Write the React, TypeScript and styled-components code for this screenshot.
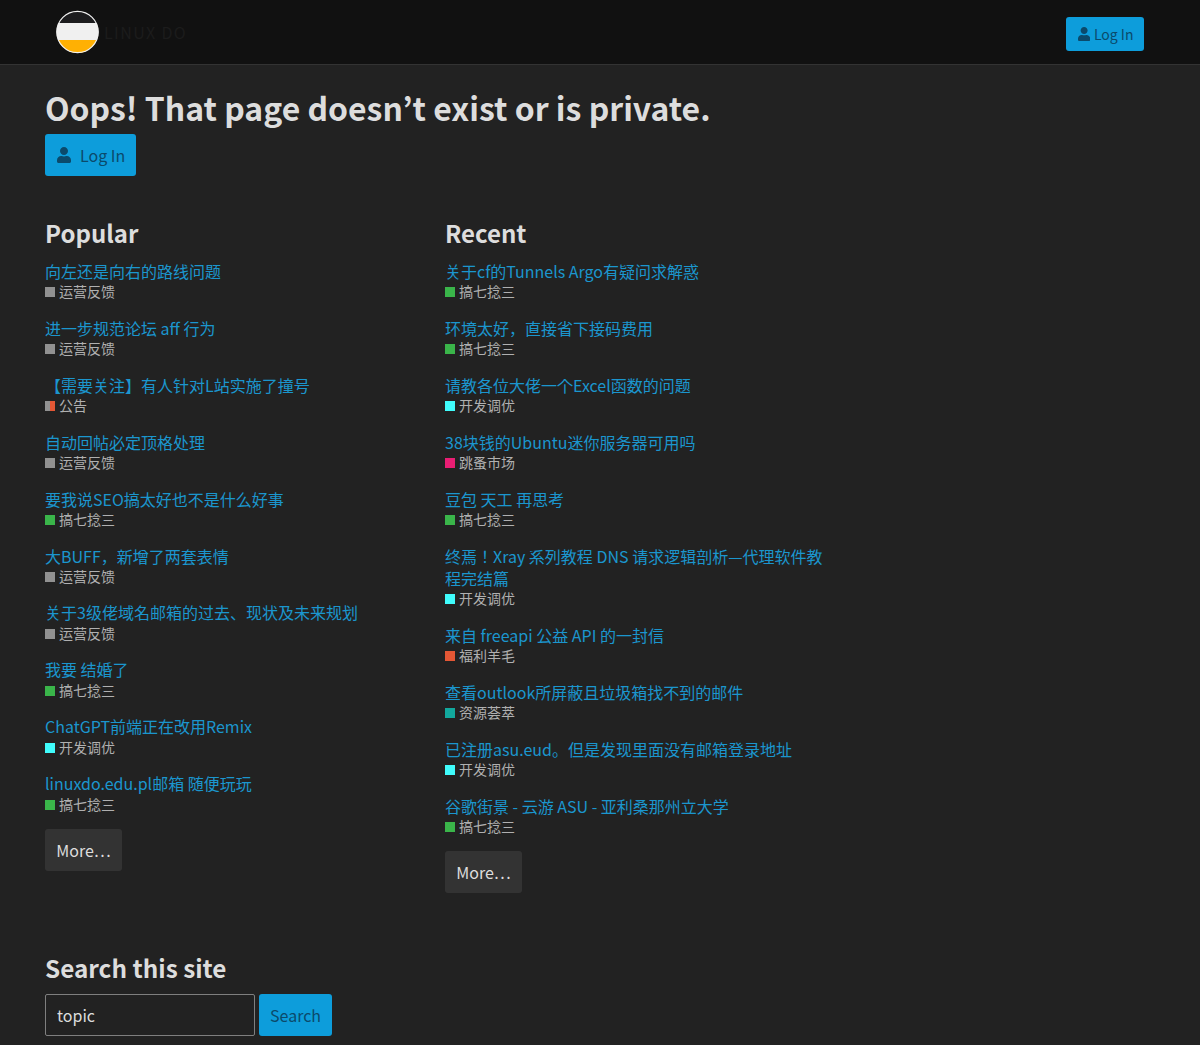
import React, { FC } from 'react';
import styled, { createGlobalStyle } from 'styled-components';

const FONT = `"Noto Sans CJK JP", "Noto Sans", sans-serif`;

const GlobalStyle = createGlobalStyle`
  html, body {
    margin: 0;
    padding: 0;
    background: #222222;
  }
  body {
    font-family: ${FONT};
    font-size: 16px;
    color: #dddddd;
  }
`;

const Header = styled.header`
  height: 64px;
  background: #111111;
  border-bottom: 1px solid #333333;
  display: flex;
  align-items: center;
  justify-content: space-between;
  padding: 0 56px;
`;

const Brand = styled.div`
  display: flex;
  align-items: center;
  gap: 4px;
`;

const BrandName = styled.span`
  font-size: 16px;
  letter-spacing: 1.4px;
  color: #1c1c1c;
`;

const HeaderLogin = styled.div`
  margin-top: 4px;
`;

const Main = styled.main`
  padding: 18px 45px 0;
`;

const Title = styled.h1`
  margin: 0 0 3px;
  font-size: 31.95px;
  line-height: 48px;
  font-weight: 700;
  color: #dddddd;
`;

const Button = styled.button<{ $small?: boolean }>`
  display: inline-flex;
  align-items: center;
  gap: ${(p) => (p.$small ? '3.5px' : '9px')};
  height: ${(p) => (p.$small ? '34px' : '42px')};
  padding: ${(p) => (p.$small ? '0 10.5px 0 11px' : '0 11px')};
  border: 0;
  border-radius: 3px;
  background: #0d9ddb;
  color: #0b4a6b;
  font-family: ${FONT};
  font-size: ${(p) => (p.$small ? '14px' : '16px')};
`;

const MoreButton = styled.button`
  display: block;
  height: 42px;
  width: 77px;
  border: 0;
  border-radius: 3px;
  background: #333333;
  color: #dddddd;
  font-family: ${FONT};
  font-size: 16px;
`;

const Columns = styled.div`
  display: flex;
  margin-top: 39px;
`;

const Column = styled.section`
  width: 400px;
  flex: none;
`;

const SectionTitle = styled.h2<{ $wide?: boolean }>`
  margin: 0;
  font-size: ${(p) => (p.$wide ? '24.3px' : '24px')};
  line-height: 36px;
  font-weight: 700;
  color: #dddddd;
`;

const TopicList = styled.ul`
  list-style: none;
  margin: 9px 0 0;
  padding: 0;
  max-width: 380px;
`;

const Topic = styled.li`
  margin-bottom: 16.5px;
`;

const TopicLink = styled.a`
  display: block;
  font-size: 16px;
  line-height: 22.4px;
  color: #1b96ce;
  text-decoration: none;
`;

const Category = styled.div`
  display: flex;
  align-items: center;
  gap: 4px;
  font-size: 14px;
  line-height: 18px;
  color: #b0b0b0;
`;

const Swatch = styled.span<{ $color: string; $side?: string }>`
  width: 10px;
  height: 10px;
  flex: none;
  margin-top: 2px;
  background: ${(p) =>
    p.$side
      ? `linear-gradient(90deg, ${p.$side} 50%, ${p.$color} 50%)`
      : p.$color};
`;

const SearchSection = styled.section`
  margin-top: 57px;
`;

const SearchRow = styled.form`
  display: flex;
  gap: 4px;
  margin-top: 8px;
`;

const SearchInput = styled.input`
  box-sizing: border-box;
  width: 210px;
  height: 42px;
  padding: 0 11px;
  border: 1px solid #7f7f7f;
  border-radius: 2px;
  background: #222222;
  color: #dddddd;
  font-family: ${FONT};
  font-size: 16px;
  outline: none;
`;

const UserGlyph = styled.svg`
  margin-left: 1px;
  flex: none;
  fill: currentColor;
`;

const GRAY = '#919191';
const GREEN = '#3ab54a';
const CYAN = '#40fcfc';
const ORANGE = '#e45735';
const PINK = '#e91e74';
const TEAL = '#12a89d';

type TopicItem = { title: string; category: string; color: string; side?: string };

const popular: TopicItem[] = [
  { title: '向左还是向右的路线问题', category: '运营反馈', color: GRAY },
  { title: '进一步规范论坛 aff 行为', category: '运营反馈', color: GRAY },
  { title: '【需要关注】有人针对L站实施了撞号', category: '公告', color: ORANGE, side: GRAY },
  { title: '自动回帖必定顶格处理', category: '运营反馈', color: GRAY },
  { title: '要我说SEO搞太好也不是什么好事', category: '搞七捻三', color: GREEN },
  { title: '大BUFF，新增了两套表情', category: '运营反馈', color: GRAY },
  { title: '关于3级佬域名邮箱的过去、现状及未来规划', category: '运营反馈', color: GRAY },
  { title: '我要 结婚了', category: '搞七捻三', color: GREEN },
  { title: 'ChatGPT前端正在改用Remix', category: '开发调优', color: CYAN },
  { title: 'linuxdo.edu.pl邮箱 随便玩玩', category: '搞七捻三', color: GREEN },
];

const recent: TopicItem[] = [
  { title: '关于cf的Tunnels Argo有疑问求解惑', category: '搞七捻三', color: GREEN },
  { title: '环境太好，直接省下接码费用', category: '搞七捻三', color: GREEN },
  { title: '请教各位大佬一个Excel函数的问题', category: '开发调优', color: CYAN },
  { title: '38块钱的Ubuntu迷你服务器可用吗', category: '跳蚤市场', color: PINK },
  { title: '豆包 天工 再思考', category: '搞七捻三', color: GREEN },
  { title: '终焉！Xray 系列教程 DNS 请求逻辑剖析—代理软件教程完结篇', category: '开发调优', color: CYAN },
  { title: '来自 freeapi 公益 API 的一封信', category: '福利羊毛', color: ORANGE },
  { title: '查看outlook所屏蔽且垃圾箱找不到的邮件', category: '资源荟萃', color: TEAL },
  { title: '已注册asu.eud。但是发现里面没有邮箱登录地址', category: '开发调优', color: CYAN },
  { title: '谷歌街景 - 云游 ASU - 亚利桑那州立大学', category: '搞七捻三', color: GREEN },
];

const Logo: FC = () => (
  <svg width="44" height="44" viewBox="0 0 44 44">
    <defs>
      <clipPath id="logoClip">
        <circle cx="21.5" cy="22" r="21" />
      </clipPath>
    </defs>
    <g clipPath="url(#logoClip)">
      <rect x="0" y="0" width="44" height="13" fill="#1c1c1e" />
      <rect x="0" y="13" width="44" height="17" fill="#f0f0f0" />
      <rect x="0" y="30" width="44" height="14" fill="#ffb003" />
    </g>
    <circle cx="21.5" cy="22" r="20.7" fill="none" stroke="#f0f0f0" strokeWidth="1.2" />
  </svg>
);

const UserIcon: FC<{ size: number }> = ({ size }) => (
  <UserGlyph width={size * 0.875} height={size} viewBox="0 0 448 512">
    <path d="M224 256c70.7 0 128-57.3 128-128S294.7 0 224 0 96 57.3 96 128s57.3 128 128 128zm89.6 32h-16.7c-22.2 10.200-46.900 16-72.900 16s-50.600-5.800-72.900-16h-16.700C60.200 288 0 348.200 0 422.400V464c0 26.500 21.500 48 48 48h352c26.500 0 48-21.500 48-48v-41.600c0-74.200-60.200-134.400-134.400-134.400z" />
  </UserGlyph>
);

const TopicColumn: FC<{ heading: string; items: TopicItem[] }> = ({ heading, items }) => (
  <Column>
    <SectionTitle>{heading}</SectionTitle>
    <TopicList>
      {items.map((item) => (
        <Topic key={item.title}>
          <TopicLink href="#">{item.title}</TopicLink>
          <Category>
            <Swatch $color={item.color} $side={item.side} />
            {item.category}
          </Category>
        </Topic>
      ))}
    </TopicList>
    <MoreButton>More…</MoreButton>
  </Column>
);

const App: FC = () => (
  <>
    <GlobalStyle />
    <Header>
      <Brand>
        <Logo />
        <BrandName>LINUX DO</BrandName>
      </Brand>
      <HeaderLogin>
        <Button $small>
          <UserIcon size={14} />
          Log In
        </Button>
      </HeaderLogin>
    </Header>
    <Main>
      <Title>Oops! That page doesn’t exist or is private.</Title>
      <Button>
        <UserIcon size={16} />
        Log In
      </Button>
      <Columns>
        <TopicColumn heading="Popular" items={popular} />
        <TopicColumn heading="Recent" items={recent} />
      </Columns>
      <SearchSection>
        <SectionTitle $wide>Search this site</SectionTitle>
        <SearchRow>
          <SearchInput defaultValue="topic" />
          <Button as="span">Search</Button>
        </SearchRow>
      </SearchSection>
    </Main>
  </>
);

export default App;
